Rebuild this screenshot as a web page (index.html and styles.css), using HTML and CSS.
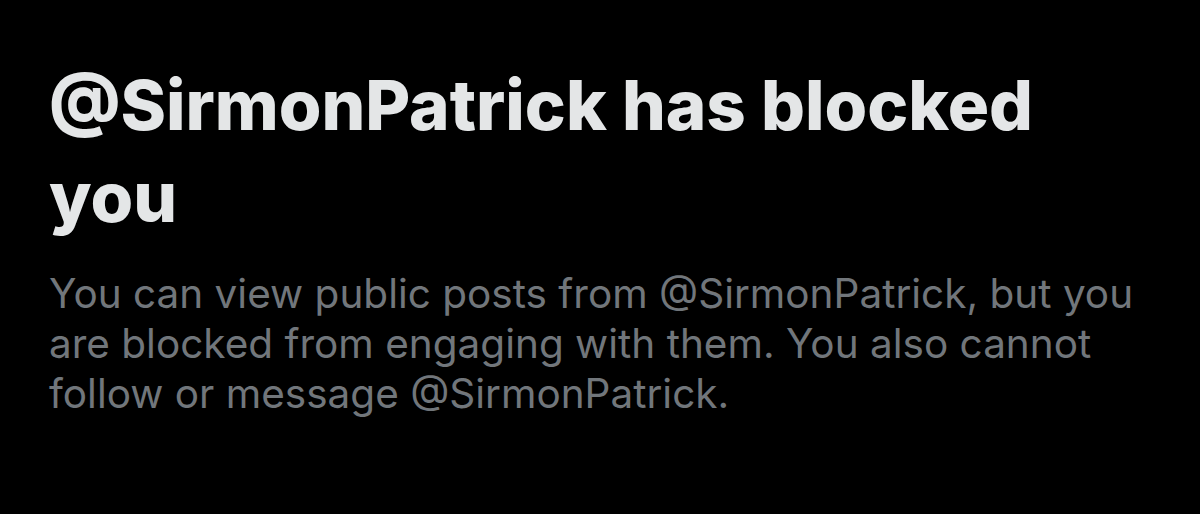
FILE: index.html
```html
<!DOCTYPE html>
<html lang="en">
<head>
<meta charset="utf-8">
<title>Blocked</title>
<link rel="stylesheet" href="styles.css">
</head>
<body>
<main class="notice">
  <h1 class="notice-title">@SirmonPatrick has blocked you</h1>
  <p class="notice-text">You can view public posts from @SirmonPatrick, but you are blocked from engaging with them. You also cannot follow or message @SirmonPatrick.</p>
</main>
</body>
</html>
```

FILE: styles.css
```css
html, body {
  margin: 0;
  padding: 0;
  background: #000;
  height: 100%;
}

.notice {
  padding: 59px 40px 0 49px;
  font-family: Inter, "Liberation Sans", sans-serif;
}

.notice-title {
  margin: 0;
  color: #e4e6e7;
  font-size: 69px;
  font-weight: 800;
  line-height: 92px;
  letter-spacing: 0;
  width: 1060px;
}

.notice-text {
  margin: 26px 0 0;
  color: #71767b;
  font-size: 40.5px;
  font-weight: 400;
  line-height: 50px;
  width: 1100px;
}
```
